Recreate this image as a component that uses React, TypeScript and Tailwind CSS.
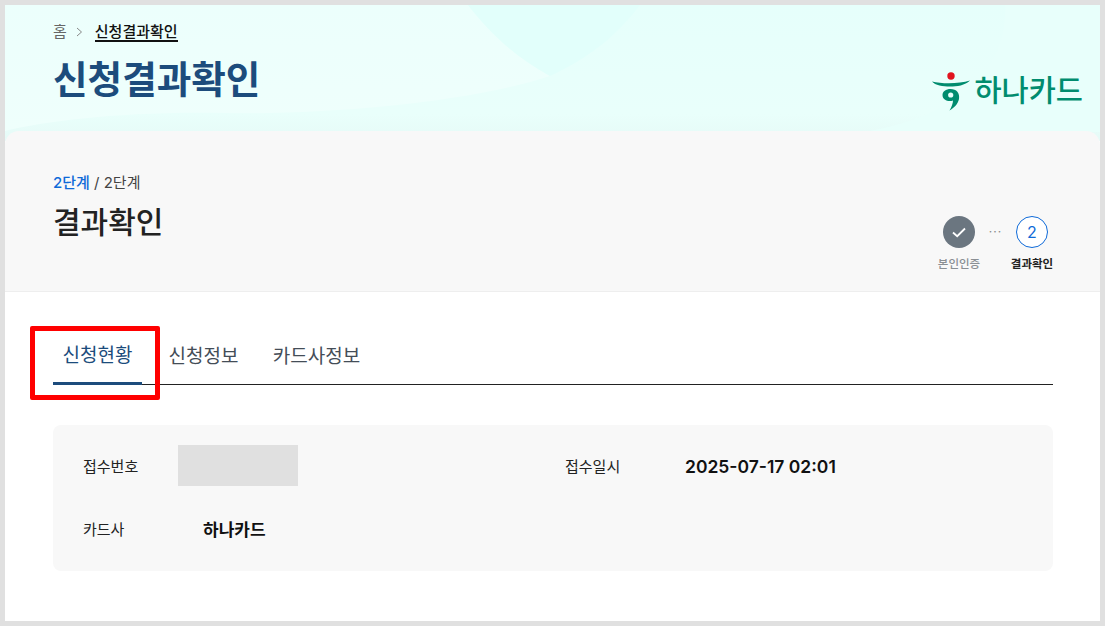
const FONT = '[font-family:Inter,"Noto_Sans_CJK_KR","Noto_Sans",sans-serif]';

function HeaderBg() {
  return (
    <svg className="absolute inset-0 w-full h-full" viewBox="0 0 1095 136" preserveAspectRatio="none" aria-hidden="true">
      <defs>
        <linearGradient id="bgFade" x1="0" y1="0" x2="0" y2="1">
          <stop offset="0" stopColor="#e6fffb" />
          <stop offset="0.8" stopColor="#e9fffb" />
          <stop offset="1" stopColor="#e6faf7" />
        </linearGradient>
        <linearGradient id="leftFade" x1="0" y1="0" x2="0" y2="1">
          <stop offset="0" stopColor="#ecfffc" />
          <stop offset="1" stopColor="#effffc" />
        </linearGradient>
      </defs>
      <rect width="1095" height="136" fill="url(#bgFade)" />
      <path d="M0 0H463C485 28 510 52 545 71C470 96 330 110 220 108C120 106 40 116 0 126Z" fill="url(#leftFade)" />
      <path d="M463 0H635C615 26 590 50 545 71C510 52 485 28 463 0Z" fill="#e2fffb" />
      <path d="M1000 0C1003 60 960 110 860 127H1095V0Z" fill="#e8fffb" />
    </svg>
  );
}

function Logo() {
  return (
    <div className="flex items-center gap-[2px]">
      <svg width="40" height="40" viewBox="0 0 40 40" aria-hidden="true">
        <circle cx="19" cy="5" r="3.7" fill="#e1141e" />
        <path d="M0 10.5C10 13 27 13 38 9.5C33 14.5 25 15.5 18 15.5C11 15.5 3 14.5 0 10.5Z" fill="#008c6e" />
        <path d="M18.5 18C24.5 18 28 22 27 28C26 33 22 37 17.5 39.5C19.5 36 21 32.5 21 29.5C17 31 10.5 29.5 10.5 24C10.5 20.5 14 18 18.5 18Z" fill="#008c6e" />
        <circle cx="18.7" cy="24" r="2.6" fill="#e8fffb" />
      </svg>
      <span className="text-[29.5px] leading-none font-medium text-[#008c6e]">하나카드</span>
    </div>
  );
}

function Step1() {
  return (
    <div className="flex flex-col items-center w-[42px]">
      <div className="w-8 h-8 rounded-full bg-[#6b7680] flex items-center justify-center">
        <svg width="14" height="11" viewBox="0 0 14 11" fill="none" aria-hidden="true">
          <path d="M1 5.5L5.2 9.2L13 1.5" stroke="#fff" strokeWidth="1.8" />
        </svg>
      </div>
      <span className="mt-[8px] text-[11.5px] leading-4 font-medium text-[#8a8f94] whitespace-nowrap">본인인증</span>
    </div>
  );
}

function Step2() {
  return (
    <div className="flex flex-col items-center w-[42px]">
      <div className="w-8 h-8 rounded-full bg-white border border-[#0f6ad8] flex items-center justify-center text-[16px] text-[#0f6ad8]">2</div>
      <span className="mt-[8px] text-[11.5px] leading-4 font-bold text-[#222] whitespace-nowrap">결과확인</span>
    </div>
  );
}

export default function App() {
  return (
    <div className={`w-[1105px] h-[626px] border-[5px] border-[#e0e0e0] bg-white relative overflow-hidden ${FONT}`}>
      <header className="relative h-[136px] pl-[48px] pr-[47px] pt-[14px]">
        <HeaderBg />
        <div className="relative flex items-center text-[15px] leading-[26px]">
          <span className="text-[#666]">홈</span>
          <svg className="mx-[9px]" width="7" height="10" viewBox="0 0 7 10" fill="none" aria-hidden="true">
            <path d="M1 1L5.5 5L1 9" stroke="#888" strokeWidth="1" />
          </svg>
          <span className="ml-[3px] font-medium text-[#111] border-b-2 border-[#111] leading-[17px] mt-[1px]">신청결과확인</span>
        </div>
        <h1 className="relative mt-[8px] text-[37.6px] leading-[54px] font-bold text-[#1c4c7c]">신청결과확인</h1>
        <div className="absolute right-[17px] top-[66px]"><Logo /></div>
      </header>

      <section className="-mt-[10px] relative h-[161px] rounded-t-[14px] bg-[#f8f8f8] border-b border-[#eeeeee] pl-[48px] pr-[47px] pt-[40px] flex justify-between">
        <div>
          <div className="text-[15px] leading-[24px] text-[#444]">
            <span className="font-medium text-[#0f6ad8]">2단계</span> / 2단계
          </div>
          <h2 className="mt-[7px] text-[30px] leading-[40px] font-medium text-[#222]">결과확인</h2>
        </div>
        <div className="flex items-start pt-[45px]">
          <Step1 />
          <span className="w-[31px] mt-[8px] text-center text-[12px] leading-4 tracking-[1px] text-[#888]">···</span>
          <Step2 />
        </div>
      </section>

      <main className="pl-[48px] pr-[47px] pt-[35px]">
        <nav className="flex h-[58px] border-b border-[#222] text-[19px]">
          <div className="w-[89px] h-[58px] border-b-[3px] border-[#1c4c7c] flex items-center justify-center pt-[4px] text-[#1c4c7c]">신청현황</div>
          <div className="ml-[17px] w-[89px] flex items-center justify-center pt-[4px] text-[#444d57]">신청정보</div>
          <div className="ml-[15px] w-[107px] flex items-center justify-center pt-[4px] text-[#444d57]">카드사정보</div>
        </nav>

        <div className="mt-[40px] h-[146px] rounded-[8px] bg-[#f8f8f8] px-[30px] pt-[20px] grid grid-cols-[482px_1fr] grid-rows-[41px_1fr] gap-y-[22px]">
          <div className="flex items-center">
            <span className="w-[95px] pt-[3px] text-[15px] text-[#222]">접수번호</span>
            <div className="w-[120px] h-[41px] bg-[#e0e0e0]" />
          </div>
          <div className="flex items-center">
            <span className="w-[120px] pt-[3px] text-[15px] text-[#222]">접수일시</span>
            <span className="pt-[4px] text-[17.5px] font-semibold text-[#111]">2025-07-17 02:01</span>
          </div>
          <div className="flex items-start col-span-2">
            <span className="w-[120px] text-[15px] leading-[44px] text-[#222]">카드사</span>
            <span className="text-[17px] leading-[44px] font-semibold text-[#111]">하나카드</span>
          </div>
        </div>
      </main>

      <div className="absolute left-[25px] top-[321px] w-[130px] h-[74px] border-[5px] border-[#ff0000] rounded-[2px]" />
    </div>
  );
}
